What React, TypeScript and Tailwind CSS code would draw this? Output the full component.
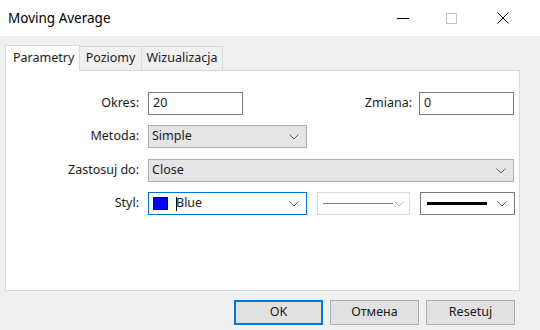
import React from 'react';

const Chevron: React.FC<{ light?: boolean }> = ({ light }) => (
  <svg width="10" height="6" viewBox="0 0 10 6" className="shrink-0">
    <path d="M0.5 0.5 L5 5 L9.5 0.5" fill="none" stroke={light ? '#c8c8c8' : '#606060'} strokeWidth="1" />
  </svg>
);

const Label: React.FC<{ children: React.ReactNode }> = ({ children }) => (
  <div className="w-[134px] shrink-0 pr-[1px] text-right text-[12.5px] text-[#1a1a1a]">{children}</div>
);

const App: React.FC = () => {
  return (
    <div
      className="w-[540px] h-[330px] flex flex-col bg-[#f0f0f0] overflow-hidden"
      style={{ fontFamily: '"Noto Sans", "Open Sans", sans-serif' }}
    >
      {/* title bar */}
      <div className="h-[36px] shrink-0 bg-white flex items-center">
        <div className="pl-[8px] flex-1 text-[13.5px] text-black">Moving Average</div>
        <div className="flex items-center">
          <div className="w-[46px] flex justify-center">
            <div className="w-[12px] h-[1px] bg-black" />
          </div>
          <div className="w-[46px] flex justify-center ml-[2px]">
            <div className="w-[11px] h-[11px] border border-[#c4c4c4]" />
          </div>
          <div className="w-[46px] flex justify-center ml-[6px] mr-[14px]">
            <svg width="12" height="12" viewBox="0 0 12 12">
              <path d="M0.5 0.5 L11.5 11.5 M11.5 0.5 L0.5 11.5" stroke="#000" strokeWidth="1" />
            </svg>
          </div>
        </div>
      </div>

      {/* tabs */}
      <div className="px-[5px] pt-[8px] flex items-end h-[34px] shrink-0">
        <div className="h-[26px] px-[7px] bg-white border border-b-0 border-[#d9d9d9] flex items-center text-[12.5px] text-[#1a1a1a] relative z-10 -mb-[1px] w-[75px]">
          Parametry
        </div>
        <div className="h-[24px] w-[62px] bg-[#f0f0f0] border border-l-0 border-b-0 border-[#d9d9d9] flex items-center justify-center text-[12.5px] text-[#1a1a1a]">
          Poziomy
        </div>
        <div className="h-[24px] w-[81px] bg-[#f0f0f0] border border-l-0 border-b-0 border-[#d9d9d9] flex items-center justify-center text-[12.5px] text-[#1a1a1a]">
          Wizualizacja
        </div>
      </div>

      {/* panel */}
      <div className="mx-[5px] mr-[20px] h-[221px] bg-white border border-[#d9d9d9] pt-[21px] flex flex-col text-[12.5px] text-[#1a1a1a]">
        <div className="flex items-center h-[23px]">
          <Label>Okres:</Label>
          <div className="ml-[8px] w-[95px] h-[23px] border border-[#7a7a7a] flex items-center px-[4px]">20</div>
          <div className="flex-1 text-right pr-[7px]">Zmiana:</div>
          <div className="w-[95px] h-[23px] border border-[#7a7a7a] flex items-center px-[4px] mr-[5px]">0</div>
        </div>

        <div className="flex items-center h-[23px] mt-[10px]">
          <Label>Metoda:</Label>
          <div className="ml-[8px] w-[159px] h-[23px] bg-[#e5e5e5] border border-[#adadad] flex items-center pl-[3px] pr-[7px]">
            <span className="flex-1">Simple</span>
            <Chevron />
          </div>
        </div>

        <div className="flex items-center h-[23px] mt-[11px]">
          <Label>Zastosuj do:</Label>
          <div className="ml-[8px] flex-1 mr-[5px] h-[23px] bg-[#e5e5e5] border border-[#adadad] flex items-center pl-[3px] pr-[7px]">
            <span className="flex-1">Close</span>
            <Chevron />
          </div>
        </div>

        <div className="flex items-center h-[23px] mt-[10px]">
          <Label>Styl:</Label>
          <div className="ml-[8px] w-[159px] h-[23px] bg-white border border-[#0078d7] flex items-center pl-[4px] pr-[7px]">
            <div className="w-[15px] h-[13px] bg-[#0000ff] border border-[#00008a] mr-[8px]" />
            <span className="flex-1 flex items-center">
              <span className="w-[1px] h-[14px] bg-black -mr-[1px]" />
              Blue
            </span>
            <Chevron />
          </div>
          <div className="ml-[10px] w-[93px] h-[23px] bg-white border border-[#d9d9d9] flex items-center pl-[5px] pr-[5px]">
            <div className="w-[70px] h-[1px] bg-[#7a7a7a]" />
            <div className="flex-1" />
            <Chevron light />
          </div>
          <div className="ml-[10px] w-[95px] h-[23px] bg-white border border-[#7a7a7a] flex items-center pl-[6px] pr-[7px]">
            <div className="w-[60px] h-[3px] bg-black" />
            <div className="flex-1" />
            <Chevron />
          </div>
        </div>
      </div>

      {/* buttons */}
      <div className="flex justify-end gap-[7px] pr-[25px] mt-[9px]">
        <button className="w-[89px] h-[25px] bg-[#e1e1e1] border-2 border-[#0078d7] text-[12.5px] text-[#1a1a1a]">OK</button>
        <button className="w-[89px] h-[25px] bg-[#e1e1e1] border border-[#adadad] text-[12.5px] text-[#1a1a1a]">Отмена</button>
        <button className="w-[89px] h-[25px] bg-[#e1e1e1] border border-[#adadad] text-[12.5px] text-[#1a1a1a]">Resetuj</button>
      </div>
    </div>
  );
};

export default App;
